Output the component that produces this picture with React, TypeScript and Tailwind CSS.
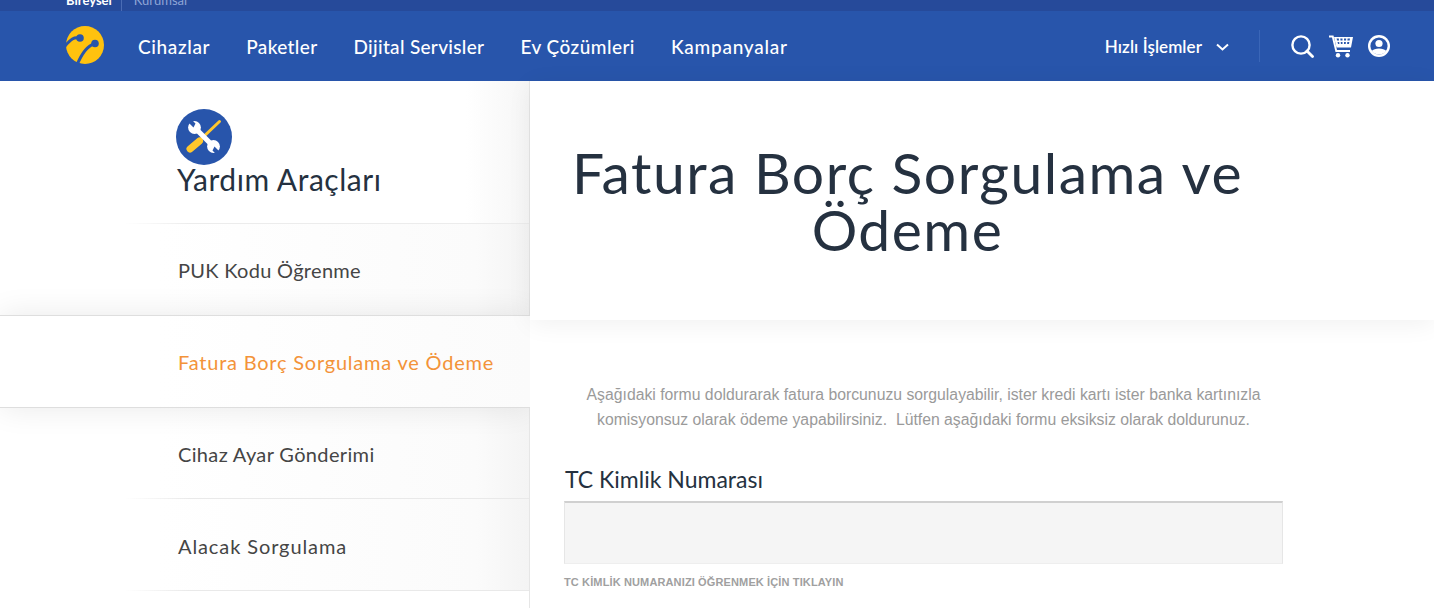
import React from "react";

const font = "font-['Lato','Liberation_Sans',sans-serif]";

function Logo() {
  return (
    <svg width="40" height="40" viewBox="0 0 40 40" className="shrink-0">
      <circle cx="20" cy="19" r="19" fill="#ffc20e" />
      <path d="M14 12 C9 11 6 13 0 20" stroke="#2855ab" strokeWidth="3" fill="none" />
      <circle cx="15" cy="12" r="3.8" fill="#2855ab" />
      <path d="M29 18 C22 20 17 27 12 39" stroke="#2855ab" strokeWidth="3" fill="none" />
      <circle cx="30" cy="17.5" r="3.8" fill="#2855ab" />
    </svg>
  );
}

function Tools() {
  return (
    <svg width="56" height="56" viewBox="0 0 56 56">
      <circle cx="28" cy="28" r="28" fill="#2855ab" />
      <path d="M24 31 L43.5 12.5" stroke="#ffc72c" strokeWidth="3" strokeLinecap="round" />
      <path d="M14 40 L23.5 32" stroke="#ffc72c" strokeWidth="7" strokeLinecap="round" />
      <path d="M20 20 L36 36" stroke="#fff" strokeWidth="5.2" />
      <circle cx="18.5" cy="18.5" r="6.4" fill="#fff" />
      <circle cx="37.5" cy="37.5" r="6.4" fill="#fff" />
      <path d="M17.5 18.5 L10 11 L14 9 L19.5 14.5 Z M38.5 37.5 L46 45 L42 47 L36.5 41.5 Z" fill="#2855ab" />
    </svg>
  );
}

function Search() {
  return (
    <svg width="24" height="24" viewBox="0 0 24 24" fill="none" stroke="#fff" strokeWidth="2.4">
      <circle cx="11" cy="11" r="8.6" />
      <path d="M17 17 L22.5 22.5" strokeLinecap="round" strokeWidth="2.8" />
    </svg>
  );
}

function Cart() {
  return (
    <svg width="24" height="24" viewBox="0 0 24 24" fill="#fff">
      <path d="M0 1.5 H4.5 L8 16 H21 V18 H6.5 L3 3.5 H0 Z" />
      <path d="M5 3 H24 L22 13.5 H7.5 Z M7.6 4.6 L8.1 6.6 H10 L9.8 4.6 Z M11.3 4.6 L11.5 6.6 H13.5 V4.6 Z M15 4.6 V6.6 H17 L17.2 4.6 Z M18.6 4.6 L18.4 6.6 H20.6 L21 4.6 Z M8.5 8 L9 10 H10.4 L10.2 8 Z M11.7 8 L11.9 10 H13.5 V8 Z M15 8 V10 H16.7 L16.9 8 Z M18.3 8 L18.1 10 H20 L20.3 8 Z" fillRule="evenodd" />
      <circle cx="9" cy="21.3" r="2.2" />
      <circle cx="18.5" cy="21.3" r="2.2" />
    </svg>
  );
}

function User() {
  return (
    <svg width="22" height="22" viewBox="0 0 22 22">
      <circle cx="11" cy="11" r="11" fill="#fff" />
      <circle cx="11" cy="11" r="8.6" fill="#2855ab" />
      <circle cx="11" cy="8.5" r="3.6" fill="#fff" />
      <path d="M3.8 16 C6 12.6 16 12.6 18.2 16 C16 20.5 6 20.5 3.8 16 Z" fill="#fff" />
    </svg>
  );
}

const rowBase =
  "flex items-center pl-[178px] text-[20px] text-[#454545] bg-gradient-to-r from-white from-[30%] via-[#fbfbfb] via-[90%] to-[#f4f4f4] border-b border-[#e9e9e9] [border-image:linear-gradient(to_right,transparent_125px,#e9e9e9_190px)_1]";

export default function App() {
  return (
    <div className={`${font} w-[1434px] h-[608px] overflow-hidden bg-white`}>
      <div className="h-[11px] bg-[#264a9a] overflow-hidden flex items-start pl-[66px] text-[13px] leading-[13px]">
        <span className="font-bold text-white -mt-[6px]">Bireysel</span>
        <span className="ml-[9px] mr-[12px] w-px h-[11px] bg-[#4a6cb5]" />
        <span className="text-[#8fa5d6] -mt-[6px]">Kurumsal</span>
      </div>
      <header className="h-[70px] bg-[#2855ab] flex items-center pl-[65px] pr-[44px] text-white">
        <Logo />
        <nav className="flex gap-[36px] ml-[33px] pt-[2px] text-[19px] font-medium">
          <span className="tracking-[0.65px]">Cihazlar</span>
          <span className="tracking-[0.36px]">Paketler</span>
          <span className="tracking-[0.32px]">Dijital Servisler</span>
          <span className="tracking-[0.46px]">Ev Çözümleri</span>
          <span className="tracking-[0.75px]">Kampanyalar</span>
        </nav>
        <div className="ml-auto flex items-center">
          <span className="text-[17px] font-semibold pt-[1px] tracking-[0.07px]">Hızlı İşlemler</span>
          <svg className="ml-[14px] mt-[2px]" width="13" height="8" viewBox="0 0 13 8" fill="none" stroke="#fff" strokeWidth="2">
            <path d="M1 1.5 L6.5 6.5 L12 1.5" />
          </svg>
          <span className="w-px h-[32px] bg-[#3a66b8] ml-[30px] mr-[30px]" />
          <Search />
          <span className="ml-[15px]"><Cart /></span>
          <span className="ml-[15px]"><User /></span>
        </div>
      </header>
      <div className="flex h-[527px]">
        <aside className="w-[530px] shrink-0 border-r border-[#e6e6e6]">
          <div className="h-[143px] pt-[28px] pl-[176px] border-b border-[#ececec] [border-image:linear-gradient(to_right,transparent_125px,#ececec_190px)_1] bg-gradient-to-r from-white from-[88%] to-[#f6f6f6]">
            <Tools />
            <div className="text-[30px] leading-[36px] text-[#253140] tracking-[0.55px] -mt-[4px] ml-[1px]">Yardım Araçları</div>
          </div>
          <div className={`h-[92px] tracking-[0.3px] ${rowBase}`}>PUK Kodu Öğrenme</div>
          <div className="relative z-10 w-[530px] h-[93px] flex items-center pl-[178px] text-[20px] tracking-[0.78px] text-[#f39339] bg-gradient-to-r from-white from-[30%] to-[#fbfbfb] border-y border-[#dedede] -mt-px shadow-[0_0_32px_rgba(0,0,0,0.09)]">
            Fatura Borç Sorgulama ve Ödeme
          </div>
          <div className={`h-[91px] pt-[2px] tracking-[0.35px] ${rowBase}`}>Cihaz Ayar Gönderimi</div>
          <div className={`h-[92px] pt-[2px] tracking-[0.9px] ${rowBase}`}>Alacak Sorgulama</div>
        </aside>
        <main className="relative z-20 flex-1 min-w-0 bg-white">
          <div className="h-[239px] pt-[63px] shadow-[0_4px_24px_rgba(0,0,0,0.06)]">
            <h1 className="w-[753px] ml-[1px] text-center text-[57px] leading-[57px] font-normal text-[#253140] tracking-[1.5px]">
              Fatura Borç Sorgulama ve Ödeme
            </h1>
          </div>
          <div className="pl-[34px] pt-[62px]">
            <p className="w-[719px] text-center font-['Liberation_Sans',sans-serif] text-[15.77px] leading-[25px] text-[#9a9a9a]">
              Aşağıdaki formu doldurarak fatura borcunuzu sorgulayabilir, ister kredi kartı ister banka kartınızla komisyonsuz olarak ödeme yapabilirsiniz.&nbsp; Lütfen aşağıdaki formu eksiksiz olarak doldurunuz.
            </p>
            <label className="block mt-[33px] ml-px text-[23px] leading-[28px] text-[#253140]">TC Kimlik Numarası</label>
            <div className="mt-[8px] w-[719px] h-[63px] bg-[#f5f5f5] border-t-2 border-x border-b border-t-[#d0d0d0] border-x-[#e6e6e6] border-b-[#eeeeee]" />
            <div className="mt-[12px] font-['Liberation_Sans',sans-serif] text-[11px] tracking-[0.13px] font-bold text-[#a0a0a0] leading-[12px]">
              TC KİMLİK NUMARANIZI ÖĞRENMEK İÇİN TIKLAYIN
            </div>
          </div>
        </main>
      </div>
    </div>
  );
}
